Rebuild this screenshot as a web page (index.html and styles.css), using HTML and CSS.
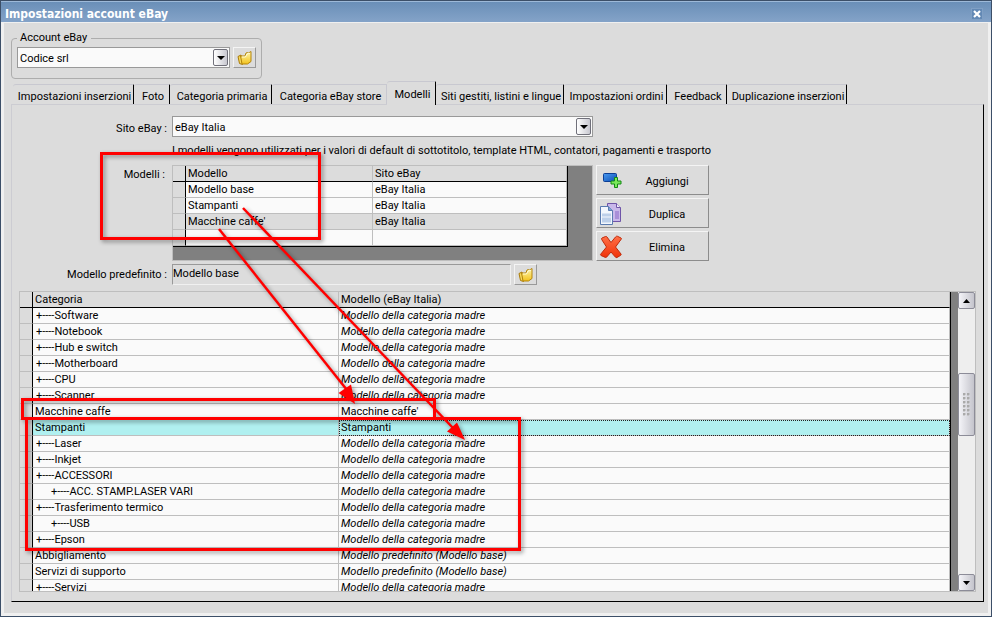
FILE: index.html
```
<!DOCTYPE html>
<html lang="it">
<head>
  <meta charset="UTF-8">
  <meta name="viewport" content="width=device-width, initial-scale=1.0">
  <title>Impostazioni account eBay</title>
  <link rel="stylesheet" href="styles.css">
</head>
<body>
  <svg class="sprite" width="0" height="0" aria-hidden="true">
    <defs>
      <linearGradient id="gold" x1="0" y1="0" x2="0" y2="1">
        <stop offset="0" stop-color="#fff7b0"/>
        <stop offset="1" stop-color="#f2c21c"/>
      </linearGradient>
      <linearGradient id="blue" x1="0" y1="0" x2="1" y2="1">
        <stop offset="0" stop-color="#4a9af0"/>
        <stop offset="1" stop-color="#0c4fb4"/>
      </linearGradient>
      <linearGradient id="red" x1="0" y1="0" x2="0" y2="1">
        <stop offset="0" stop-color="#ff7048"/>
        <stop offset="1" stop-color="#f03208"/>
      </linearGradient>
      <symbol id="folder" viewBox="0 0 16 16">
        <path d="M1 6.500L4 5l1.500 9.500-3-1z" fill="#f7d95a" stroke="#a97a08"/>
        <path d="M3.500 6H8l1-3 1.500-.5 1 .5 2.500-1.500v10L10.500 14H5z" fill="url(#gold)" stroke="#b4850c"/>
        <path d="M5 7h3.500L10 4l3-.8" fill="none" stroke="#fffbd8"/>
      </symbol>
    </defs>
  </svg>

  <div class="window">
    <header class="titlebar">
      <h1>Impostazioni account eBay</h1>
      <button class="close" type="button" aria-label="Chiudi">
        <svg width="8" height="8" viewBox="0 0 8 8"><path d="M1 1l6 6M7 1L1 7" stroke="#fff" stroke-width="2.200"/></svg>
      </button>
    </header>

    <main class="client">
      <fieldset class="account">
        <legend>Account eBay</legend>
        <div class="account-row">
          <div class="combo">
            <select aria-label="Account eBay"><option>Codice srl</option></select>
            <span class="arrow"></span>
          </div>
          <button class="icon-button" type="button" aria-label="Apri account"><svg width="16" height="16"><use href="#folder"/></svg></button>
        </div>
      </fieldset>

      <nav class="tabs" role="tablist">
        <button type="button" role="tab">Impostazioni inserzioni</button>
        <button type="button" role="tab">Foto</button>
        <button type="button" role="tab">Categoria primaria</button>
        <button type="button" role="tab" class="before-active">Categoria eBay store</button>
        <button type="button" role="tab" class="active" aria-selected="true">Modelli</button>
        <button type="button" role="tab">Siti gestiti, listini e lingue</button>
        <button type="button" role="tab">Impostazioni ordini</button>
        <button type="button" role="tab">Feedback</button>
        <button type="button" role="tab">Duplicazione inserzioni</button>
      </nav>

      <section class="panel">
        <div class="form">
          <label for="site">Sito eBay :</label>
          <div class="combo site">
            <select id="site"><option>eBay Italia</option></select>
            <span class="arrow"></span>
          </div>

          <p class="hint">I modelli vengono utilizzati per i valori di default di sottotitolo, template HTML, contatori, pagamenti e trasporto</p>

          <span class="label-top" id="models-label">Modelli :</span>
          <div class="models">
            <div class="models-grid">
              <table class="grid" aria-labelledby="models-label">
                <colgroup><col class="c-mark"><col class="c-model"><col></colgroup>
                <thead>
                  <tr><th></th><th>Modello</th><th>Sito eBay</th></tr>
                </thead>
                <tbody>
                  <tr><td></td><td>Modello base</td><td>eBay Italia</td></tr>
                  <tr><td></td><td>Stampanti</td><td>eBay Italia</td></tr>
                  <tr class="current"><td></td><td>Macchine caffe'</td><td>eBay Italia</td></tr>
                  <tr><td></td><td></td><td></td></tr>
                </tbody>
              </table>
            </div>
            <div class="actions">
              <button type="button">
                <svg width="24" height="24" viewBox="0 0 24 24">
                  <rect x="4.500" y="4.500" width="13" height="8" rx="1" fill="url(#blue)" stroke="#0d3f94"/>
                  <path d="M15.500 8.500h3V12h3.500v3h-3.500v3.500h-3V15H12v-3h3.500z" fill="#7be85a" stroke="#128a12"/>
                </svg>
                <span>Aggiungi</span>
              </button>
              <button type="button">
                <svg width="24" height="24" viewBox="0 0 24 24">
                  <path d="M8.500 1.500h9l4 4v14h-13z" fill="#c9b8ea" stroke="#6f55a8"/>
                  <path d="M17.500 1.500v4h4" fill="#f0eafa" stroke="#6f55a8"/>
                  <path d="M16 9h4v8h-4z" fill="#a98fd8"/>
                  <path d="M1.500 4.500h8l4 4v14h-12z" fill="#f2f7fd" stroke="#5a7bb0"/>
                  <path d="M9.500 4.500v4h4" fill="#7fa3d4" stroke="#5a7bb0"/>
                  <path d="M3 11.500h9v3H3zM3 15.500h9v5H3z" fill="#bdd0ea"/>
                </svg>
                <span>Duplica</span>
              </button>
              <button type="button">
                <svg width="24" height="24" viewBox="0 0 24 24">
                  <path d="M3 3l3.500-1.500q1-.3 1.500.5L12 7.500l4.500-5.500q1-1.200 2-.7L22 3q.8.500.2 1.200L16.500 12l5.500 7q.4.800-.3 1.300L18 22.500q-1 .4-1.600-.4L12 17l-4.300 5q-.6.800-1.400.4L2 20.500q-.8-.6-.3-1.300L7.500 12 2.700 4.500Q2.100 3.500 3 3z" fill="url(#red)" stroke="#c02a0a"/>
                </svg>
                <span>Elimina</span>
              </button>
            </div>
          </div>

          <label for="default-model">Modello predefinito :</label>
          <div class="default-row">
            <input id="default-model" type="text" value="Modello base" readonly>
            <button class="icon-button" type="button" aria-label="Scegli modello"><svg width="16" height="16"><use href="#folder"/></svg></button>
          </div>
        </div>

        <div class="categories">
          <div class="categories-view">
            <table class="grid">
              <colgroup><col class="c-mark"><col class="c-category"><col></colgroup>
              <thead>
                <tr><th></th><th>Categoria</th><th>Modello (eBay Italia)</th></tr>
              </thead>
              <tbody>
                <tr><td></td><td class="l1">+----Software</td><td><i>Modello della categoria madre</i></td></tr>
                <tr><td></td><td class="l1">+----Notebook</td><td><i>Modello della categoria madre</i></td></tr>
                <tr><td></td><td class="l1">+----Hub e switch</td><td><i>Modello della categoria madre</i></td></tr>
                <tr><td></td><td class="l1">+----Motherboard</td><td><i>Modello della categoria madre</i></td></tr>
                <tr><td></td><td class="l1">+----CPU</td><td><i>Modello della categoria madre</i></td></tr>
                <tr><td></td><td class="l1">+----Scanner</td><td><i>Modello della categoria madre</i></td></tr>
                <tr><td></td><td>Macchine caffe</td><td>Macchine caffe'</td></tr>
                <tr class="selected"><td></td><td>Stampanti</td><td class="focus">Stampanti</td></tr>
                <tr><td></td><td class="l1">+----Laser</td><td><i>Modello della categoria madre</i></td></tr>
                <tr><td></td><td class="l1">+----Inkjet</td><td><i>Modello della categoria madre</i></td></tr>
                <tr><td></td><td class="l1">+----ACCESSORI</td><td><i>Modello della categoria madre</i></td></tr>
                <tr><td></td><td class="l2">+----ACC. STAMP.LASER VARI</td><td><i>Modello della categoria madre</i></td></tr>
                <tr><td></td><td class="l1">+----Trasferimento termico</td><td><i>Modello della categoria madre</i></td></tr>
                <tr><td></td><td class="l2">+----USB</td><td><i>Modello della categoria madre</i></td></tr>
                <tr><td></td><td class="l1">+----Epson</td><td><i>Modello della categoria madre</i></td></tr>
                <tr><td></td><td>Abbigliamento</td><td><i>Modello predefinito (Modello base)</i></td></tr>
                <tr><td></td><td>Servizi di supporto</td><td><i>Modello predefinito (Modello base)</i></td></tr>
                <tr><td></td><td class="l1">+----Servizi</td><td><i>Modello della categoria madre</i></td></tr>
              </tbody>
            </table>
          </div>
          <div class="scrollbar">
            <button type="button" aria-label="Su"><svg width="7" height="4" viewBox="0 0 7 4"><path d="M0 4L3.500 0 7 4z"/></svg></button>
            <div class="track-top"></div>
            <div class="thumb"><span class="grip"></span></div>
            <div class="track-bottom"></div>
            <button type="button" aria-label="Giù"><svg width="7" height="4" viewBox="0 0 7 4"><path d="M0 0h7L3.500 4z"/></svg></button>
          </div>
        </div>
      </section>
    </main>

    <!-- red callouts drawn over the dialog -->
    <svg class="callouts" width="992" height="617" viewBox="0 0 992 617" aria-hidden="true">
      <g fill="none" stroke="#f00" stroke-width="3">
        <rect x="101.500" y="153.500" width="218" height="85"/>
        <rect x="22.500" y="399.500" width="412" height="19"/>
        <rect x="26.500" y="418.500" width="493" height="131"/>
      </g>
      <g stroke="#f00" stroke-width="2.500" fill="#f00">
        <path d="M219 229L347 390"/>
        <path d="M243 208L453 428"/>
        <path stroke="none" d="M355 404L338.500 393 351 384.500z"/>
        <path stroke="none" d="M465 440L447 431.500 457 422.500z"/>
      </g>
    </svg>
  </div>
</body>
</html>
```
FILE: styles.css
```
* {
  box-sizing: border-box;
}

body {
  margin: 0;
  font-family: Roboto, sans-serif;
  font-size: 11px;
  line-height: 14px;
  color: #000;
}

button,
input,
select {
  font: inherit;
  color: inherit;
  margin: 0;
  padding: 0;
  border-radius: 0;
}

.sprite {
  position: absolute;
}

.window {
  position: relative;
  display: flex;
  flex-direction: column;
  height: 100vh;
  background: #dcdcdc;
  border: 1px solid #3c4f68;
  overflow: hidden;
}

.titlebar {
  display: flex;
  align-items: center;
  justify-content: space-between;
  height: 21px;
  padding: 3px 8px 0 4px;
  background: linear-gradient(#6a8fb8, #84a3c8);
  border-top: 1px solid #9db9d8;
}

.titlebar h1 {
  margin: 0;
  padding-top: 1px;
  font-family: "DejaVu Sans Condensed", "DejaVu Sans", sans-serif;
  font-size: 12px;
  font-weight: bold;
  color: #fff;
}

.close {
  display: flex;
  align-items: center;
  justify-content: center;
  width: 12px;
  height: 12px;
  background: #6389b5;
  border: 1px solid #7f9fc4;
}

.client {
  flex: 1;
  min-height: 0;
  display: flex;
  flex-direction: column;
  padding: 8px 4px 11px 7px;
  border: solid #f0f0f0;
  border-width: 1px 3px 3px;
}

/* account box */

.account {
  width: 251px;
  height: 48px;
  margin: 0;
  padding: 0 5px;
  border: 1px solid #adadad;
  border-radius: 4px;
}

.account legend {
  padding: 0 4px 0 3px;
}

.account-row {
  display: flex;
  gap: 3px;
  margin-top: 2px;
}

.combo {
  position: relative;
  flex: 1;
}

.combo select {
  display: block;
  width: 100%;
  height: 21px;
  padding: 2px 20px 0 2px;
  appearance: none;
  background: #fafafa;
  border: 1px solid #999;
}

/* sits over the right end of the select */
.arrow {
  position: absolute;
  top: 2px;
  right: 2px;
  width: 15px;
  height: 17px;
  border: 1px solid #70707a;
  border-radius: 2px;
  background: linear-gradient(90deg, #fff, #c8c8d0);
  pointer-events: none;
}

.arrow::after {
  content: "";
  position: absolute;
  left: 3px;
  top: 6px;
  border: solid transparent;
  border-width: 4px 4px 0;
  border-top-color: #000;
}

.icon-button {
  display: flex;
  align-items: center;
  justify-content: center;
  width: 23px;
  height: 21px;
  background: #dcdcdc;
  border: 1px solid;
  border-color: #f4f4f4 #999 #999 #f4f4f4;
}

/* tabs */

.tabs {
  display: grid;
  grid-template-columns: 121px 36px 102px 115px 49px 128px 103px 60px 120px;
  align-items: end;
  height: 23px;
  margin: 2px 0 0 2px;
}

.tabs button {
  height: 20px;
  padding: 4px 0 0 3px;
  background: #dcdcdc;
  border: solid #c8c8d0;
  border-width: 1px 1px 0 0;
  border-right-color: #000;
  border-radius: 3px 1px 0 0;
  white-space: nowrap;
}

.tabs .before-active {
  border-right-color: #c8c8d0;
}

.tabs .active {
  position: relative;
  height: 24px;
  margin-bottom: -1px;
  padding-bottom: 1px;
}

.panel {
  flex: 1;
  min-height: 0;
  display: flex;
  flex-direction: column;
  padding: 11px 7px 9px 7px;
  border: solid #ccccd2;
  border-width: 1px;
  border-right-color: #000;
  border-bottom-color: #000;
}

.form {
  display: grid;
  grid-template-columns: 148px 1fr;
  column-gap: 5px;
  align-items: center;
}

.form label,
.label-top {
  text-align: right;
}

.form label {
  padding-top: 4px;
}

.label-top {
  align-self: start;
  padding: 3px 2px 0 0;
}

.form .site {
  width: 421px;
}

.hint {
  grid-column: 2;
  margin: 7px 0;
  white-space: nowrap;
}

/* grids */

.grid {
  table-layout: fixed;
  border-spacing: 0;
  width: 100%;
  background: #fafafa;
  border-right: 1px solid #000;
}

.grid th,
.grid td {
  height: 16px;
  padding: 1px 2px 0;
  border: solid #bebebe;
  border-width: 0 1px 1px 0;
  font-weight: normal;
  line-height: 14px;
  text-align: left;
  white-space: nowrap;
}

.grid th {
  background: #dcdcdc;
  border-bottom-color: #000;
}

.grid th:first-child,
.grid td:first-child {
  background: #dcdcdc;
  border-right-color: #000;
}

.c-mark {
  width: 13px;
}

.c-model {
  width: 187px;
}

.c-category {
  width: 306px;
}

.grid .l1 {
  padding-left: 3px;
}

.grid .l2 {
  padding-left: 18px;
}

.grid .current td {
  background: #dcdcdc;
}

.grid .selected td:not(:first-child) {
  background: #b0f0f0;
}

.grid .focus {
  outline: 1px dotted #222;
  outline-offset: -1px;
}

.models {
  display: flex;
  gap: 3px;
}

.models-grid {
  width: 421px;
  height: 96px;
  padding: 0 24px 0 0;
  background: #808080;
  border: 1px solid #bebebe;
}

.models-grid .grid {
  border-bottom: 1px solid #000;
}

.actions {
  display: flex;
  flex-direction: column;
  gap: 3px;
}

.actions button {
  display: flex;
  align-items: center;
  width: 113px;
  height: 30px;
  padding: 2px 2px 0;
  background: #dcdcdc;
  border: 1px solid;
  border-color: #f4f4f4 #8c8c8c #8c8c8c #f4f4f4;
}

.actions span {
  flex: 1;
  padding: 2px 0 0 5px;
  text-align: center;
}

.default-row {
  display: flex;
  gap: 3px;
  margin-top: 3px;
}

.default-row input {
  width: 339px;
  height: 21px;
  padding: 0 0 3px;
  background: #dcdcdc;
  border: 1px solid;
  border-color: #999 #f0f0f0 #f0f0f0 #999;
}

.categories {
  flex: 1;
  min-height: 0;
  display: flex;
  margin-top: 6px;
  border: 1px solid #bebebe;
}

.categories-view {
  flex: 1;
  overflow: hidden;
  padding-right: 7px;
  background: #808080;
}

.scrollbar {
  display: flex;
  flex-direction: column;
  width: 17px;
  background: #eee;
}

.scrollbar button,
.thumb {
  display: flex;
  align-items: center;
  justify-content: center;
  background: linear-gradient(90deg, #f4f4f8, #c4c4cc);
  border: 1px solid #8c8c98;
  border-radius: 2px;
}

.scrollbar button {
  height: 17px;
}

.track-top {
  flex: 65;
}

.track-bottom {
  flex: 139;
}

.thumb {
  height: 63px;
}

.grip {
  width: 8px;
  height: 24px;
  background: radial-gradient(circle at 1px 1px, #aaa 1px, transparent 2px) 0 0 / 4px 4px;
}

.callouts {
  position: absolute;
  top: -1px;
  left: -1px;
  pointer-events: none;
  filter: drop-shadow(2px 2px 2px rgba(0, 0, 0, 0.4));
}
```
